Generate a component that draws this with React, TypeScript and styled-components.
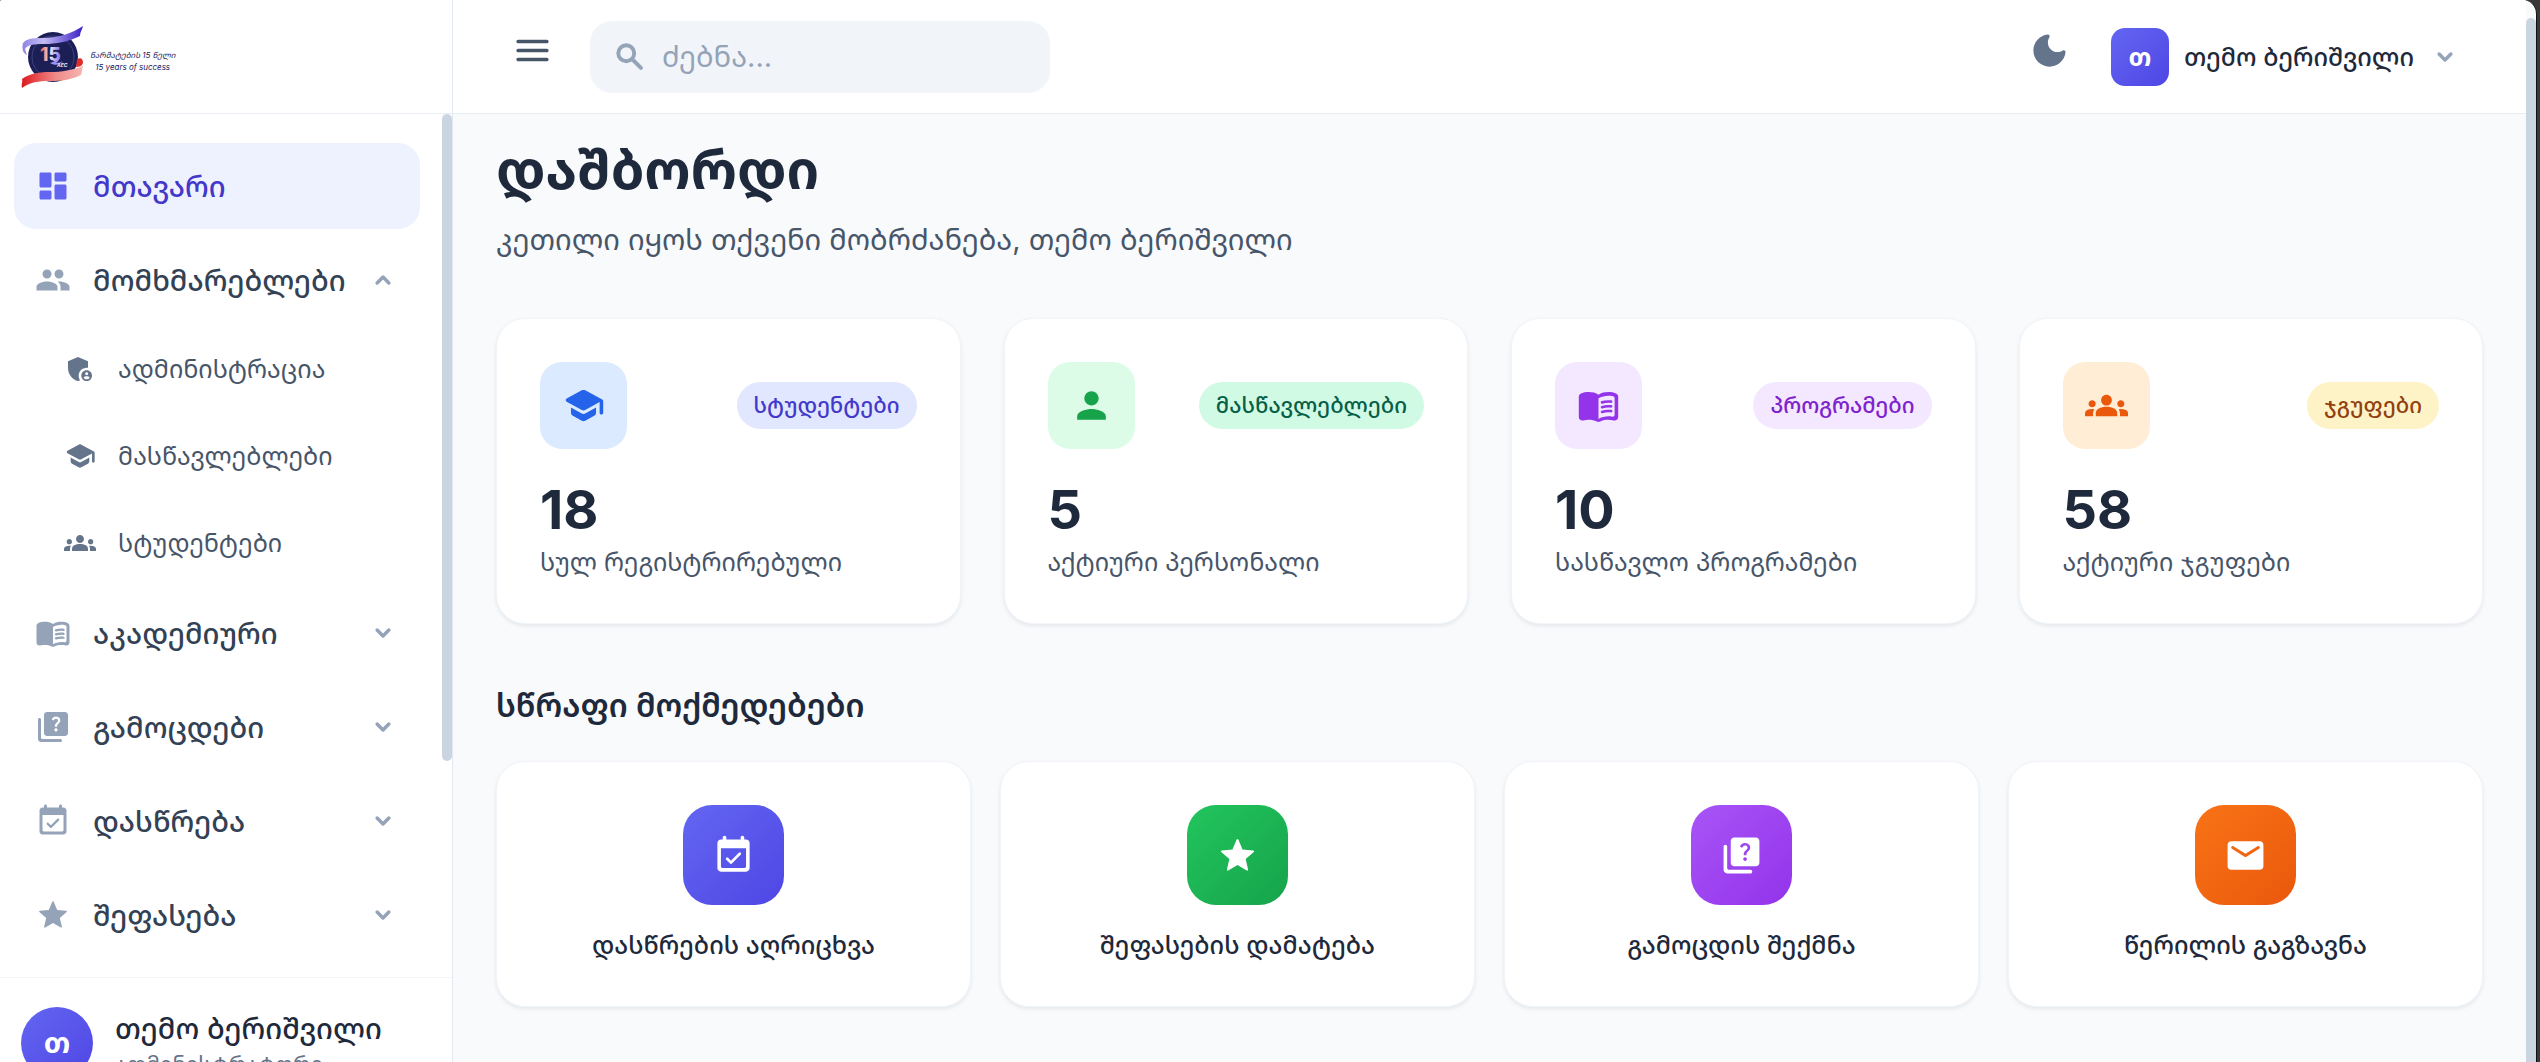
import React from 'react';
import styled, { createGlobalStyle } from 'styled-components';
import { MdAdminPanelSettings, MdGroups, MdPeople, MdPerson } from 'react-icons/md';

const GlobalStyle = createGlobalStyle`
  *, *::before, *::after { box-sizing: border-box; }
  body {
    margin: 0;
    background: #383838;
    color: #1e293b;
    font-family: Inter, "Noto Sans Georgian", "Noto Sans", sans-serif;
  }
  button, input { font: inherit; }
  h1, h2, p { margin: 0; }
`;

/* ---------- icons ---------- */

type IconProps = { size?: number | string };

const shape = (...paths: string[]) =>
  function Icon({ size = 36 }: IconProps) {
    return (
      <svg width={size} height={size} viewBox="0 0 24 24" fill="currentColor" fillRule="evenodd" aria-hidden="true">
        {paths.map((d) => (
          <path key={d} d={d} />
        ))}
      </svg>
    );
  };

const stroked = (d: string) =>
  function Icon({ size = 32 }: IconProps) {
    return (
      <svg
        width={size}
        height={size}
        viewBox="0 0 24 24"
        fill="none"
        stroke="currentColor"
        strokeWidth="2.6"
        strokeLinecap="round"
        strokeLinejoin="round"
        aria-hidden="true"
      >
        <path d={d} />
      </svg>
    );
  };

const DashboardIcon = shape(
  'M4 13h6c.55 0 1-.45 1-1V4c0-.55-.45-1-1-1H4c-.55 0-1 .45-1 1v8c0 .55.45 1 1 1zm0 8h6c.55 0 1-.45 1-1v-4c0-.55-.45-1-1-1H4c-.55 0-1 .45-1 1v4c0 .55.45 1 1 1zm10 0h6c.55 0 1-.45 1-1v-8c0-.55-.45-1-1-1h-6c-.55 0-1 .45-1 1v8c0 .55.45 1 1 1zM13 4v4c0 .55.45 1 1 1h6c.55 0 1-.45 1-1V4c0-.55-.45-1-1-1h-6c-.55 0-1 .45-1 1z',
);
const MenuIcon = shape(
  'M4 18h16c.55 0 1-.45 1-1s-.45-1-1-1H4c-.55 0-1 .45-1 1s.45 1 1 1zm0-5h16c.55 0 1-.45 1-1s-.45-1-1-1H4c-.55 0-1 .45-1 1s.45 1 1 1zM3 7c0 .55.45 1 1 1h16c.55 0 1-.45 1-1s-.45-1-1-1H4c-.55 0-1 .45-1 1z',
);
const MoonIcon = shape(
  'M11.01 3.05C6.51 3.54 3 7.36 3 12c0 4.97 4.03 9 9 9 4.63 0 8.45-3.5 8.95-8 .09-.79-.78-1.42-1.54-.95-.84.54-1.84.85-2.91.85-2.98 0-5.4-2.42-5.4-5.4 0-1.06.31-2.06.84-2.89.45-.67-.04-1.63-.93-1.56z',
);
const SearchIcon = stroked('M9.5 4.2a5.3 5.3 0 1 0 0 10.6 5.3 5.3 0 0 0 0-10.6zM14 14l5.3 5.3');
const ChevronDownIcon = stroked('M7.6 9.8 12 14.2l4.4-4.4');
const ChevronUpIcon = stroked('M7.6 14.2 12 9.8l4.4 4.4');
const SchoolIcon = shape(
  'M5 13.18v2.81c0 .73.4 1.41 1.04 1.76l5 2.73c.6.33 1.32.33 1.92 0l5-2.73c.64-.35 1.04-1.03 1.04-1.76v-2.81l-6.04 3.3c-.6.33-1.32.33-1.92 0L5 13.18zm6.04-9.66-8.43 4.6c-.69.38-.69 1.38 0 1.76l8.43 4.6c.6.33 1.32.33 1.92 0L21 10.09V16c0 .55.45 1 1 1s1-.45 1-1V9.59c0-.37-.2-.7-.52-.88l-9.52-5.19c-.6-.32-1.32-.32-1.92 0z',
);
const BookIcon = shape(
  'M12 6c-1.45-1.1-3.55-1.5-5.5-1.5-1.4 0-2.9.2-4.2.75C1.5 5.6 1 6.3 1 7.15V18.4c0 1.3 1.22 2.26 2.48 1.94.98-.25 2.02-.34 3.02-.34 1.56 0 3.22.26 4.56.92.6.3 1.28.3 1.87 0 1.34-.67 3-.92 4.56-.92 1 0 2.04.09 3.02.34 1.26.33 2.48-.63 2.48-1.94V7.15c0-.85-.5-1.55-1.29-1.9-1.31-.55-2.8-.75-4.2-.75-1.95 0-4.05.4-5.5 1.5zm9 11.23c0 .63-.58 1.09-1.2.98-.75-.14-1.53-.2-2.3-.2-1.7 0-4.15.65-5.5 1.49V8c1.35-.85 3.8-1.5 5.5-1.5.92 0 1.83.09 2.7.28.46.1.8.51.8.98v9.47z',
  'M13.98 11.01c-.32 0-.61-.2-.71-.52-.13-.39.09-.82.48-.94 1.54-.5 3.53-.66 5.36-.45.41.05.71.42.66.83s-.42.71-.83.66c-1.62-.19-3.39-.04-4.73.39-.08.01-.16.03-.23.03zm0 2.66c-.32 0-.61-.2-.71-.52-.13-.39.09-.82.48-.94 1.53-.5 3.53-.66 5.36-.45.41.05.71.42.66.83s-.42.71-.83.66c-1.62-.19-3.39-.04-4.73.39-.08.02-.16.03-.23.03zm0 2.66c-.32 0-.61-.2-.71-.52-.13-.39.09-.82.48-.94 1.53-.5 3.53-.66 5.36-.45.41.05.71.42.66.83s-.42.7-.83.66c-1.62-.19-3.39-.04-4.73.39-.08.02-.16.03-.23.03z',
);
const QuizIcon = shape(
  'M3 6c-.55 0-1 .45-1 1v13c0 1.1.9 2 2 2h13c.55 0 1-.45 1-1s-.45-1-1-1H5c-.55 0-1-.45-1-1V7c0-.55-.45-1-1-1z',
  'M20 2H8c-1.1 0-2 .9-2 2v12c0 1.1.9 2 2 2h12c1.1 0 2-.9 2-2V4c0-1.1-.9-2-2-2zM13.51 10.16c.41-.73 1.18-1.16 1.63-1.8.48-.68.21-1.94-1.14-1.94-.88 0-1.32.67-1.5 1.23l-1.37-.57C11.51 5.96 12.52 5 13.99 5c1.23 0 2.08.56 2.51 1.26.37.6.58 1.73.01 2.57-.63.93-1.23 1.21-1.56 1.81-.13.24-.18.4-.18 1.18h-1.52c.01-.41-.06-1.08.26-1.66zM12.95 13.95c0-.59.47-1.04 1.05-1.04.59 0 1.04.45 1.04 1.04 0 .58-.44 1.05-1.04 1.05-.58 0-1.05-.47-1.05-1.05z',
);
const EventIcon = shape(
  'M19 3h-1V2c0-.55-.45-1-1-1s-1 .45-1 1v1H8V2c0-.55-.45-1-1-1s-1 .45-1 1v1H5c-1.11 0-1.99.9-1.99 2L3 19c0 1.1.89 2 2 2h14c1.1 0 2-.9 2-2V5c0-1.1-.9-2-2-2zm-1 16H6c-.55 0-1-.45-1-1V8h14v10c0 .55-.45 1-1 1z',
  'M16 10.53c-.29-.29-.77-.29-1.06 0l-4.35 4.35L9 13.29c-.29-.29-.77-.29-1.06 0-.29.29-.29.77 0 1.06l2.12 2.12c.29.29.77.29 1.06 0L16 11.59c.29-.29.29-.77 0-1.06z',
);
const StarIcon = shape(
  'M12 17.27l5.17 3.12c.38.23.85-.11.75-.54l-1.37-5.88 4.56-3.95c.33-.29.16-.84-.29-.88l-6.01-.51-2.35-5.54c-.17-.41-.75-.41-.92 0L9.19 8.63l-6.01.51c-.44.04-.62.59-.28.88l4.56 3.95-1.37 5.88c-.1.43.37.77.75.54L12 17.27z',
);
const MailIcon = shape(
  'M20 4H4c-1.1 0-2 .9-2 2v12c0 1.1.9 2 2 2h16c1.1 0 2-.9 2-2V6c0-1.1-.9-2-2-2zm-.4 4.25-7.07 4.42c-.32.2-.74.2-1.06 0L4.4 8.25c-.25-.16-.4-.43-.4-.72 0-.67.73-1.07 1.3-.72L12 11l6.7-4.19c.57-.35 1.3.05 1.3.72 0 .29-.15.56-.4.72z',
);

/* ---------- shell ---------- */

const Shell = styled.div`
  display: flex;
  height: 100vh;
  margin-right: 3px;
  overflow: hidden;
  background: #f8fafc;
  border-right: 1px solid #111;
  border-radius: 2px 14px 0 0;
`;

const Sidebar = styled.aside`
  display: flex;
  flex: none;
  flex-direction: column;
  width: 453px;
  background: #fff;
  border-right: 1px solid #e2e8f0;
`;

const Brand = styled.a`
  display: flex;
  flex: none;
  align-items: center;
  gap: 6px;
  height: 114px;
  padding: 0 21px;
  border-bottom: 1px solid #e9eef4;
  color: #1e1b5e;
  text-decoration: none;
`;

const BrandText = styled.span`
  display: grid;
  justify-items: center;
  padding-top: 8px;
  font-style: italic;
  font-size: 8px;
  line-height: 12px;
`;

const NavScroll = styled.nav`
  display: flex;
  flex: none;
`;

const Thumb = styled.div`
  flex: none;
  width: 10px;
  height: 75%;
  background: #cbd5e1;
  border-radius: 5px;
`;

const PageThumb = styled(Thumb)`
  height: auto;
  margin-top: 18px;
  border-radius: 5px 5px 0 0;
`;

const NavList = styled.ul`
  display: flex;
  flex: 1;
  flex-direction: column;
  gap: 8px;
  min-width: 0;
  margin: 0;
  padding: 29px 22px 19px 14px;
  list-style: none;
`;

const SubList = styled.ul`
  display: flex;
  flex-direction: column;
  gap: 8px;
  margin: 6px 0 0;
  padding: 0;
  list-style: none;
`;

const NavLink = styled.a`
  display: flex;
  align-items: center;
  gap: 22px;
  height: 86px;
  padding: 0 21px;
  border-radius: 22px;
  background: #eef2ff;
  color: #4338ca;
  font-size: 29px;
  font-weight: 500;
  line-height: 43px;
  text-decoration: none;

  svg { flex: none; color: #6366f1; }
`;

const NavButton = styled.button`
  display: flex;
  align-items: center;
  gap: 22px;
  width: 100%;
  height: 86px;
  padding: 0 21px;
  border: 0;
  border-radius: 22px;
  background: none;
  color: #334155;
  font-size: 29px;
  font-weight: 500;
  line-height: 43px;
  text-align: left;

  span { flex: 1; min-width: 0; white-space: nowrap; }
  svg { flex: none; color: #94a3b8; }
`;

const SubLink = styled.a`
  display: flex;
  align-items: center;
  gap: 22px;
  height: 79px;
  padding-left: 50px;
  color: #475569;
  font-size: 25px;
  line-height: 36px;
  text-decoration: none;

  svg { flex: none; color: #64748b; }
`;

const Profile = styled.div`
  display: flex;
  flex: none;
  gap: 22px;
  padding: 29px 21px;
  border-top: 1px solid #f1f5f9;
`;

const Avatar = styled.span<{ $round?: boolean }>`
  display: flex;
  flex: none;
  align-items: center;
  justify-content: center;
  width: ${(p) => (p.$round ? 72 : 58)}px;
  height: ${(p) => (p.$round ? 72 : 58)}px;
  border-radius: ${(p) => (p.$round ? '50%' : '14px')};
  background: linear-gradient(135deg, #6366f1, #4f46e5);
  color: #fff;
  font-size: ${(p) => (p.$round ? 29 : 25)}px;
  font-weight: 700;
  line-height: 36px;
`;

const ProfileName = styled.p`
  color: #1e293b;
  font-size: 29px;
  font-weight: 500;
  line-height: 43px;
  white-space: nowrap;
`;

const ProfileRole = styled.p`
  color: #64748b;
  font-size: 22px;
  line-height: 29px;
`;

/* ---------- top bar ---------- */

const Page = styled.div`
  flex: 1;
  min-width: 0;
`;

const TopBar = styled.header`
  display: flex;
  align-items: center;
  height: 114px;
  padding: 0 43px 0 44px;
  background: #fff;
  border-bottom: 1px solid #e9eef4;
`;

const IconButton = styled.button<{ $color: string }>`
  display: flex;
  flex: none;
  padding: 0 14px 12px;
  border: 0;
  background: none;
  color: ${(p) => p.$color};
`;

const SearchBox = styled.label`
  display: flex;
  align-items: center;
  gap: 14px;
  width: 460px;
  height: 72px;
  margin-left: 22px;
  margin-right: auto;
  padding: 0 22px;
  border-radius: 22px;
  background: #f1f5f9;
  color: #94a3b8;

  svg { flex: none; }
`;

const SearchInput = styled.input`
  flex: 1;
  min-width: 0;
  padding: 0;
  border: 0;
  outline: 0;
  background: none;
  color: #1e293b;
  font-size: 29px;
  line-height: 43px;

  &::placeholder { color: #94a3b8; opacity: 1; }
`;

const UserButton = styled.button`
  display: flex;
  align-items: center;
  gap: 15px;
  margin-left: 14px;
  padding: 0 22px 0 12px;
  border: 0;
  background: none;
  color: #1e293b;
  font-size: 25px;
  font-weight: 500;
  line-height: 36px;

  svg { color: #94a3b8; }
`;

/* ---------- content ---------- */

const Content = styled.main`
  padding: 23px 43px;
`;

const Title = styled.h1`
  font-size: 54px;
  font-weight: 700;
  line-height: 65px;
`;

const Subtitle = styled.p`
  margin-top: 16px;
  color: #475569;
  font-size: 29px;
  line-height: 43px;
`;

const StatGrid = styled.section`
  display: grid;
  grid-template-columns: repeat(4, minmax(0, 1fr));
  gap: 43px;
  margin-top: 57px;
`;

const Card = styled.div`
  padding: 43px;
  border: 1px solid #f1f5f9;
  border-radius: 29px;
  background: #fff;
  box-shadow: 0 2px 4px rgba(15, 23, 42, 0.08);
`;

const StatHead = styled.div`
  display: flex;
  align-items: center;
  justify-content: space-between;
  margin-bottom: 28px;
`;

const StatIcon = styled.span<{ $bg: string; $fg: string }>`
  display: flex;
  align-items: center;
  justify-content: center;
  width: 87px;
  height: 87px;
  border-radius: 22px;
  background: ${(p) => p.$bg};
  color: ${(p) => p.$fg};
`;

const Badge = styled.span<{ $bg: string; $fg: string }>`
  padding: 9px 17px;
  border-radius: 24px;
  background: ${(p) => p.$bg};
  color: ${(p) => p.$fg};
  font-size: 22px;
  font-weight: 500;
  line-height: 29px;
`;

const StatValue = styled.p`
  font-size: 54px;
  font-weight: 700;
  line-height: 65px;
`;

const StatLabel = styled.p`
  margin-top: 2px;
  color: #475569;
  font-size: 25px;
  line-height: 36px;
`;

const SectionTitle = styled.h2`
  margin-top: 57px;
  font-size: 32px;
  font-weight: 600;
  line-height: 50px;
`;

const ActionGrid = styled.section`
  display: grid;
  grid-template-columns: repeat(4, minmax(0, 1fr));
  gap: 29px;
  margin-top: 30px;
`;

const ActionCard = styled(Card).attrs({ as: 'button' })`
  display: flex;
  flex-direction: column;
  align-items: center;
  gap: 22px;
  color: #1e293b;
  font-size: 25px;
  font-weight: 500;
  line-height: 36px;
`;

const ActionIcon = styled.span<{ $from: string; $to: string }>`
  display: flex;
  align-items: center;
  justify-content: center;
  width: 101px;
  height: 100px;
  border-radius: 29px;
  background: linear-gradient(135deg, ${(p) => p.$from}, ${(p) => p.$to});
  color: #fff;
`;

/* ---------- data ---------- */

const USER = 'თემო ბერიშვილი';

const subItems = [
  { icon: MdAdminPanelSettings, label: 'ადმინისტრაცია' },
  { icon: SchoolIcon, label: 'მასწავლებლები' },
  { icon: MdGroups, label: 'სტუდენტები' },
];

const groups = [
  { icon: BookIcon, label: 'აკადემიური' },
  { icon: QuizIcon, label: 'გამოცდები' },
  { icon: EventIcon, label: 'დასწრება' },
  { icon: StarIcon, label: 'შეფასება' },
];

const stats = [
  { icon: SchoolIcon, bg: '#dbeafe', fg: '#2563eb', badge: 'სტუდენტები', badgeBg: '#e0e7ff', badgeFg: '#4338ca', value: 18, label: 'სულ რეგისტრირებული' },
  { icon: MdPerson, bg: '#dcfce7', fg: '#16a34a', badge: 'მასწავლებლები', badgeBg: '#d1fae5', badgeFg: '#065f46', value: 5, label: 'აქტიური პერსონალი' },
  { icon: BookIcon, bg: '#f3e8ff', fg: '#9333ea', badge: 'პროგრამები', badgeBg: '#f3e8ff', badgeFg: '#7e22ce', value: 10, label: 'სასწავლო პროგრამები' },
  { icon: MdGroups, bg: '#ffedd5', fg: '#ea580c', badge: 'ჯგუფები', badgeBg: '#fef3c7', badgeFg: '#92400e', value: 58, label: 'აქტიური ჯგუფები' },
];

const actions = [
  { icon: EventIcon, from: '#6366f1', to: '#4f46e5', label: 'დასწრების აღრიცხვა' },
  { icon: StarIcon, from: '#22c55e', to: '#16a34a', label: 'შეფასების დამატება' },
  { icon: QuizIcon, from: '#a855f7', to: '#9333ea', label: 'გამოცდის შექმნა' },
  { icon: MailIcon, from: '#f97316', to: '#ea580c', label: 'წერილის გაგზავნა' },
];

function Emblem() {
  return (
    <svg width="63" height="64" viewBox="0 0 63 64" aria-hidden="true">
      <defs>
        <linearGradient id="top" x1="0" x2="1">
          <stop offset="0" stopColor="#8f83e6" />
          <stop offset=".35" stopColor="#c3bcf4" />
          <stop offset="1" stopColor="#3a1fc4" />
        </linearGradient>
        <linearGradient id="bottom" x1="0" x2="1">
          <stop offset="0" stopColor="#dd1a1f" />
          <stop offset=".55" stopColor="#f08a88" />
          <stop offset="1" stopColor="#f6b5b2" />
        </linearGradient>
        <linearGradient id="digits" x1="0" x2="1">
          <stop offset=".1" stopColor="#ef6f6c" />
          <stop offset=".5" stopColor="#f3e6f4" />
          <stop offset="1" stopColor="#7a6cf0" />
        </linearGradient>
      </defs>
      <circle cx="32" cy="32" r="25" fill="#1b1f56" />
      <circle cx="32" cy="32" r="21" fill="none" stroke="#46508c" strokeWidth=".7" />
      <path d="M56 34c4-2 6 0 6 4-1 3-4 4-7 4z" fill="#e02a2c" />
      <path d="M2 18c3-4 9-5 18-5 17 0 30-4 42-12-1 4-3 6-3 10-12 6-24 8-36 8-10 0-17 1-19 5l2 6C1 28 1 22 2 18z" fill="url(#top)" />
      <path d="M1 63c-1-4 1-6 0-9 8-6 18-7 28-7 12 0 22-2 33-6-1 4-1 6-2 9-10 5-20 6-31 6-12 0-20 1-28 7z" fill="url(#bottom)" />
      <text x="19" y="36" fontFamily="Inter, sans-serif" fontSize="19" fontWeight="800" fill="url(#digits)">15</text>
      <path d="M29 38c4-1 7-3 10-6-1 3-2 5-4 6 3 0 5-1 7-2-3 4-8 5-13 2z" fill="#9d92f2" />
      <text x="36" y="42" fontFamily="Inter, sans-serif" fontSize="5" fontWeight="700" fontStyle="italic" fill="#e8e6fb">AEC</text>
    </svg>
  );
}

export default function App() {
  return (
    <>
      <GlobalStyle />
      <Shell>
        <Sidebar>
          <Brand href="#">
            <Emblem />
            <BrandText>
              <span>წარმატების 15 წელი</span>
              <span>15 years of success</span>
            </BrandText>
          </Brand>
          <NavScroll>
            <NavList>
              <li>
                <NavLink href="#" aria-current="page">
                  <DashboardIcon />
                  მთავარი
                </NavLink>
              </li>
              <li>
                <NavButton type="button" aria-expanded="true">
                  <MdPeople size={36} />
                  <span>მომხმარებლები</span>
                  <ChevronUpIcon />
                </NavButton>
                <SubList>
                  {subItems.map(({ icon: Icon, label }) => (
                    <li key={label}>
                      <SubLink href="#">
                        <Icon size={32} />
                        {label}
                      </SubLink>
                    </li>
                  ))}
                </SubList>
              </li>
              {groups.map(({ icon: Icon, label }) => (
                <li key={label}>
                  <NavButton type="button" aria-expanded="false">
                    <Icon size={36} />
                    <span>{label}</span>
                    <ChevronDownIcon />
                  </NavButton>
                </li>
              ))}
            </NavList>
            <Thumb />
          </NavScroll>
          <Profile>
            <Avatar $round>თ</Avatar>
            <div>
              <ProfileName>{USER}</ProfileName>
              <ProfileRole>ადმინისტრატორი</ProfileRole>
            </div>
          </Profile>
        </Sidebar>
        <Page>
          <TopBar>
            <IconButton type="button" $color="#475569" aria-label="მენიუ">
              <MenuIcon size={43} />
            </IconButton>
            <SearchBox>
              <SearchIcon size={36} />
              <SearchInput type="search" placeholder="ძებნა..." aria-label="ძებნა" />
            </SearchBox>
            <IconButton type="button" $color="#64748b" aria-label="მუქი რეჟიმი">
              <MoonIcon size={43} />
            </IconButton>
            <UserButton type="button">
              <Avatar>თ</Avatar>
              {USER}
              <ChevronDownIcon />
            </UserButton>
          </TopBar>
          <Content>
            <Title>დაშბორდი</Title>
            <Subtitle>კეთილი იყოს თქვენი მობრძანება, {USER}</Subtitle>
            <StatGrid>
              {stats.map(({ icon: Icon, ...s }) => (
                <Card key={s.label}>
                  <StatHead>
                    <StatIcon $bg={s.bg} $fg={s.fg}>
                      <Icon size={43} />
                    </StatIcon>
                    <Badge $bg={s.badgeBg} $fg={s.badgeFg}>{s.badge}</Badge>
                  </StatHead>
                  <StatValue>{s.value}</StatValue>
                  <StatLabel>{s.label}</StatLabel>
                </Card>
              ))}
            </StatGrid>
            <SectionTitle>სწრაფი მოქმედებები</SectionTitle>
            <ActionGrid>
              {actions.map(({ icon: Icon, from, to, label }) => (
                <ActionCard key={label} type="button">
                  <ActionIcon $from={from} $to={to}>
                    <Icon size={43} />
                  </ActionIcon>
                  {label}
                </ActionCard>
              ))}
            </ActionGrid>
          </Content>
        </Page>
        <PageThumb />
      </Shell>
    </>
  );
}
